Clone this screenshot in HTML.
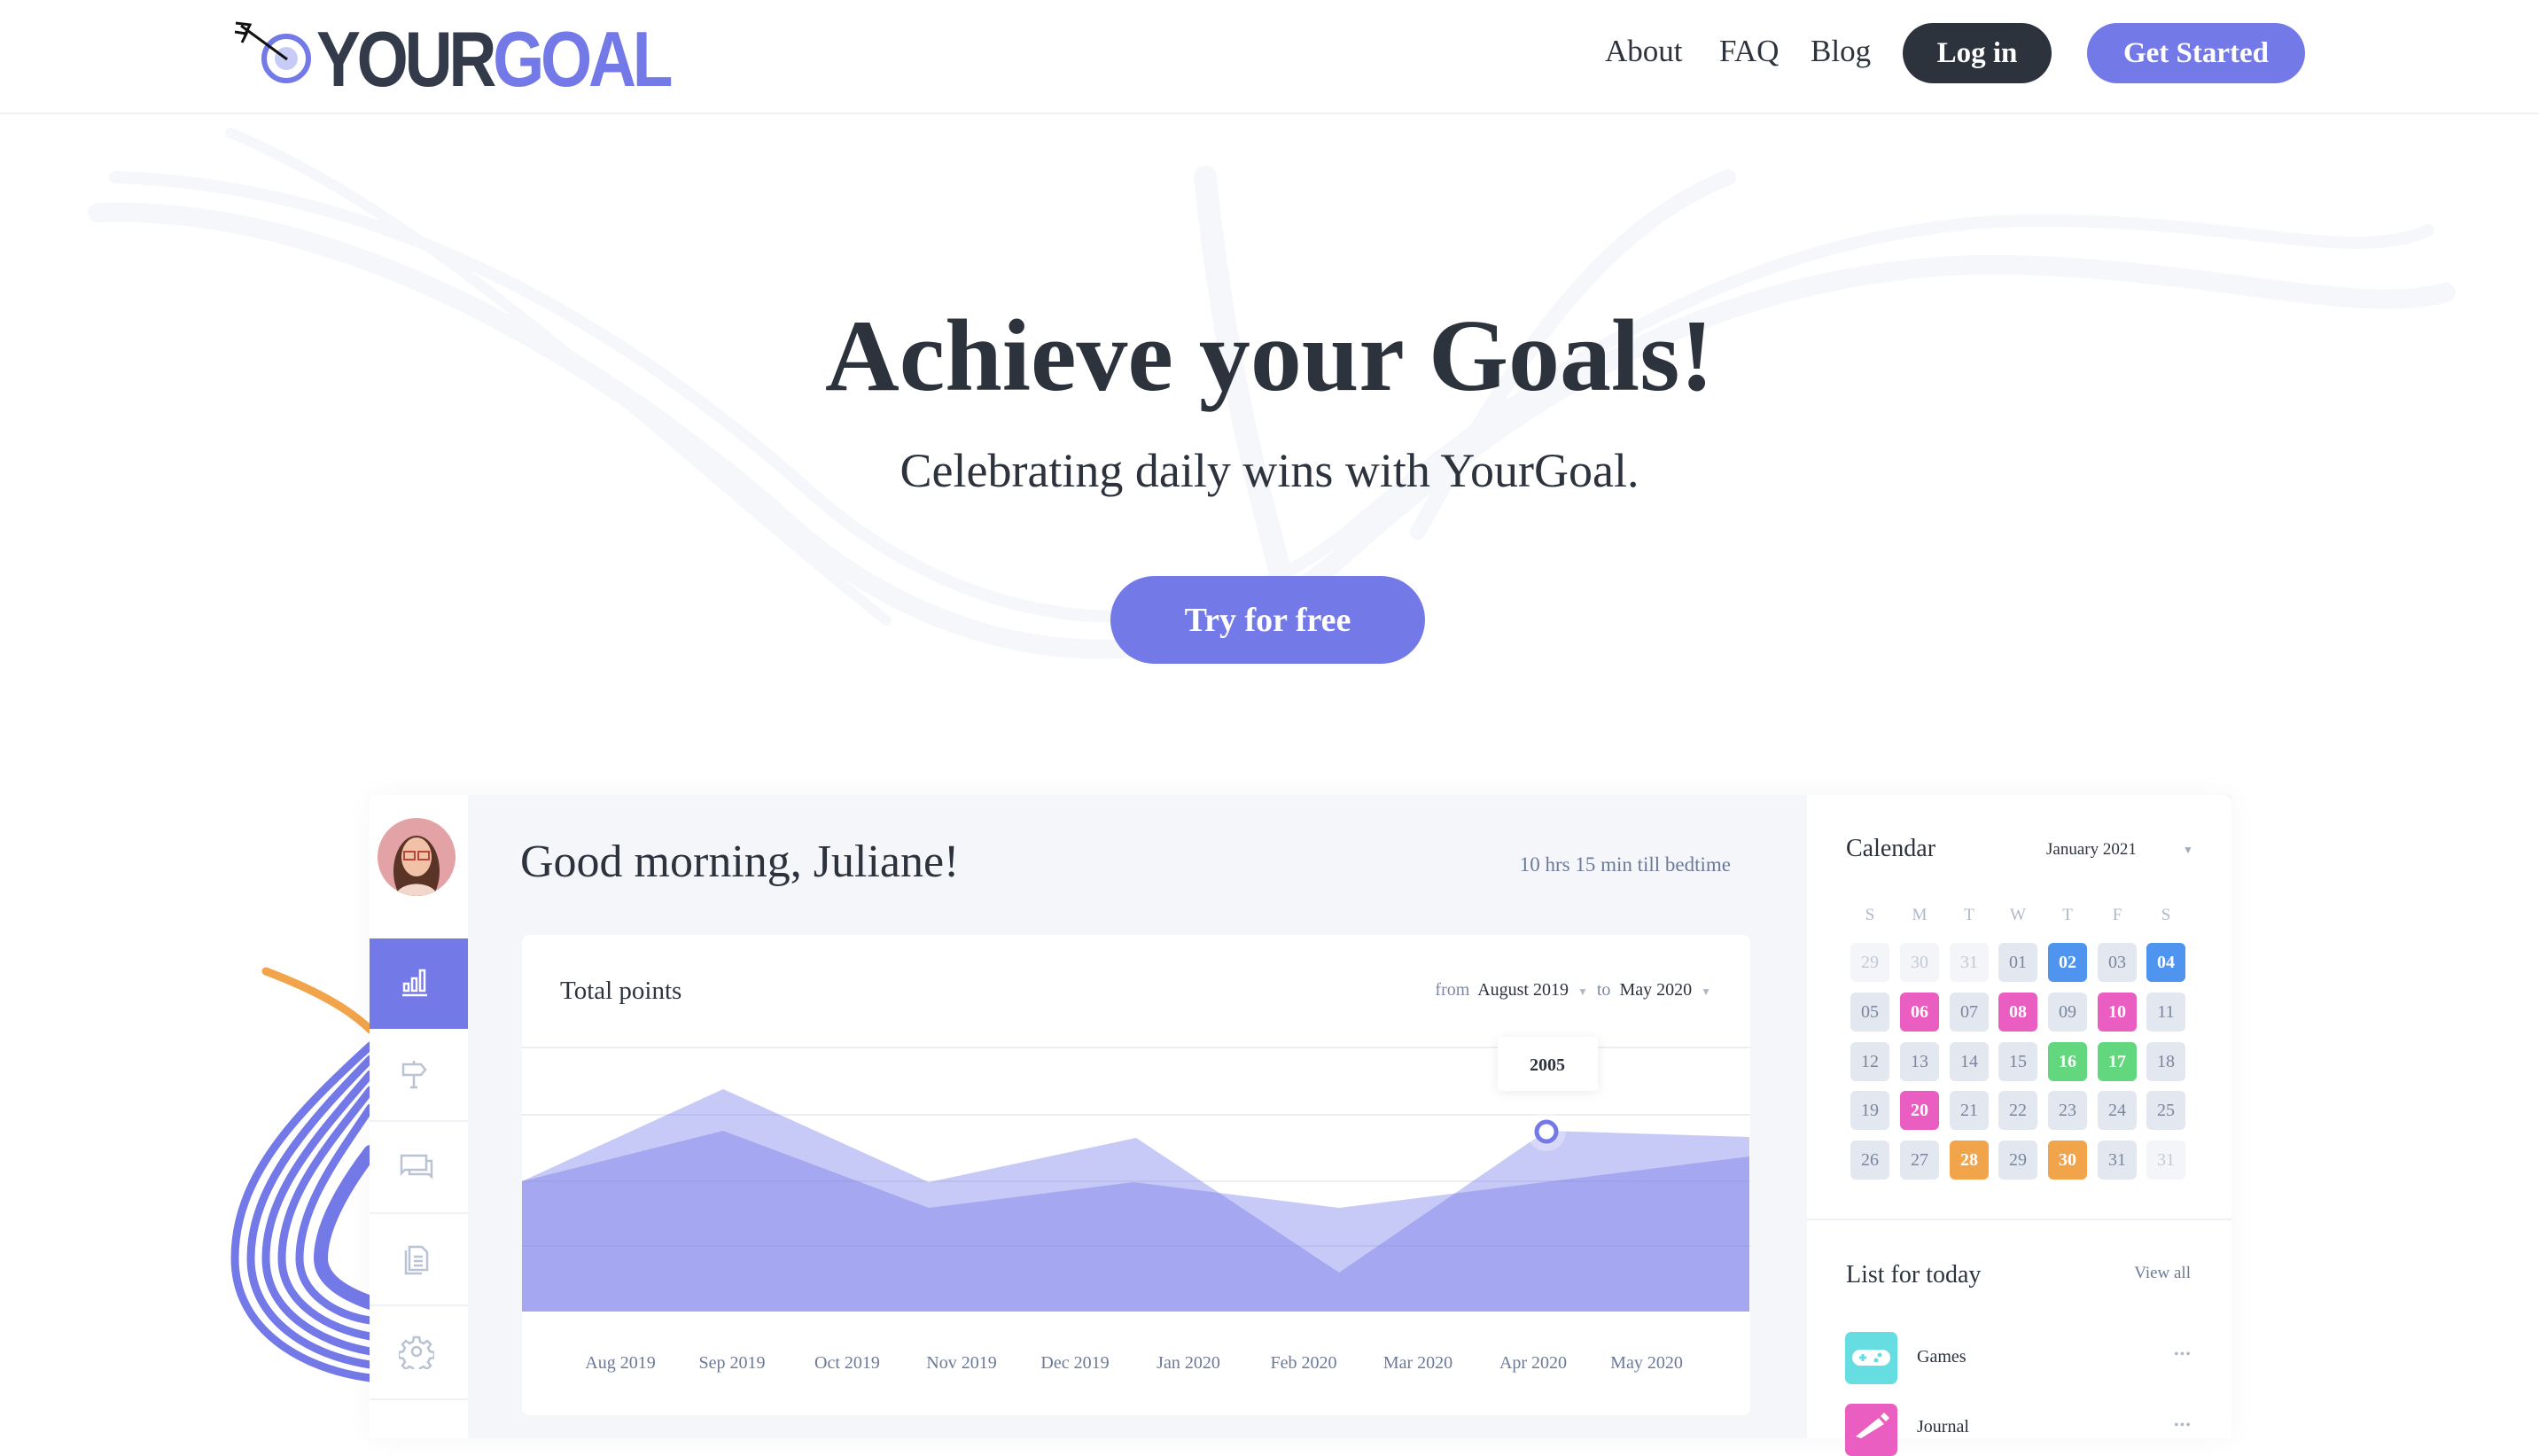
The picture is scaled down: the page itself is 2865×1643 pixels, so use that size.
<!DOCTYPE html>
<html><head><meta charset="utf-8"><style>
*{margin:0;padding:0;box-sizing:border-box}
body{width:2865px;height:1623px;overflow:hidden;background:#fff;position:relative;font-family:"Liberation Serif",serif;color:#2d333d}
.a{position:absolute;white-space:nowrap}
.nav{font-size:35px;top:38px;color:#2d333d}
.btn{position:absolute;border-radius:40px;color:#fff;font-weight:bold;font-size:33px;display:flex;align-items:center;justify-content:center}
.cell{position:absolute;width:44px;height:44px;border-radius:6px;background:#e3e7f0;color:#7a869e;font-size:20px;display:flex;align-items:center;justify-content:center}
.f{background:#f3f5f9;color:#c3c9d6}
.b{background:#4f94ef;color:#fff;font-weight:bold}
.p{background:#ea5ec1;color:#fff;font-weight:bold}
.g{background:#63d77d;color:#fff;font-weight:bold}
.o{background:#f2a44b;color:#fff;font-weight:bold}
.xl{position:absolute;top:1527px;font-size:20px;color:#6b7a99;transform:translateX(-50%)}
.wd{position:absolute;top:1022px;font-size:19px;color:#b0b8c8;transform:translateX(-50%)}
</style></head><body>
<svg class="a" style="left:0;top:128px" width="2865" height="700" viewBox="0 128 2865 700" fill="none" stroke="#f6f7fb" stroke-linecap="round">
<path d="M110 240 C400 230 700 420 900 600 C1050 730 1300 800 1500 640 C1700 460 1900 320 2200 300 C2450 290 2650 360 2760 330" stroke-width="22"/>
<path d="M130 200 C450 210 720 380 920 560 C1080 700 1320 760 1520 600 C1720 430 1950 270 2250 250 C2500 240 2650 300 2740 260" stroke-width="14"/>
<path d="M1360 200 C1380 400 1420 560 1460 700" stroke-width="26"/>
<path d="M1600 600 C1700 420 1800 260 1950 200" stroke-width="18"/>
<path d="M260 150 C500 250 750 500 1000 700" stroke-width="12"/>
</svg>
<div class="a" style="left:0;top:127px;width:2865px;height:2px;background:#eef0f3"></div>
<svg class="a" style="left:262px;top:24px" width="100" height="75" viewBox="0 0 100 75">
<circle cx="61" cy="42" r="25" fill="none" stroke="#7479e8" stroke-width="6"/>
<circle cx="61" cy="42" r="13" fill="#c9cbf7"/>
<path d="M62 43 L10 5 M4 2 L20 4 L14 16 M3 12 L16 14 L11 24" stroke="#111" stroke-width="3" fill="none"/>
</svg>
<div class="a" style="left:357px;top:16px;font-family:'Liberation Sans',sans-serif;font-weight:bold;font-size:88px;letter-spacing:-5px;transform:scaleX(0.85);transform-origin:left"><span style="color:#333a4a">YOUR</span><span style="color:#7479e8">GOAL</span></div>
<div class="a nav" style="left:1811px">About</div>
<div class="a nav" style="left:1940px">FAQ</div>
<div class="a nav" style="left:2043px">Blog</div>
<div class="btn" style="left:2147px;top:26px;width:168px;height:68px;background:#2d333d">Log in</div>
<div class="btn" style="left:2355px;top:26px;width:246px;height:68px;background:#7479e8">Get Started</div>
<div class="a" style="left:0;width:2865px;text-align:center;top:336px;font-size:116px;font-weight:bold">Achieve your Goals!</div>
<div class="a" style="left:0;width:2865px;text-align:center;top:500px;font-size:54px">Celebrating daily wins with YourGoal.</div>
<div class="btn" style="left:1253px;top:650px;width:355px;height:99px;border-radius:50px;background:#7479e8;font-size:38px">Try for free</div>
<svg class="a" style="left:250px;top:1080px" width="180" height="500" viewBox="250 1080 180 500" fill="none" stroke-linecap="round">
<path d="M300 1096 C350 1115 390 1135 418 1162" stroke="#f2a44b" stroke-width="9"/>
<g stroke="#7479e8" stroke-width="9">
<path d="M418 1180 C330 1260 265 1330 265 1420 C265 1500 340 1545 418 1555"/>
<path d="M418 1195 C345 1270 283 1340 283 1420 C283 1490 350 1530 418 1540"/>
<path d="M418 1212 C360 1280 300 1345 300 1420 C300 1480 360 1515 418 1525"/>
<path d="M418 1230 C372 1290 318 1350 318 1420 C318 1470 370 1500 418 1508"/>
<path d="M418 1250 C385 1300 338 1360 338 1420 C338 1460 380 1485 418 1490"/>
<path d="M418 1300 C395 1330 362 1380 362 1420 C362 1445 390 1460 418 1470" stroke-width="16"/>
</g>
</svg>
<div class="a" style="left:417px;top:897px;width:2101px;height:726px;background:#f5f6fa;box-shadow:0 0 30px rgba(0,0,0,0.04)"></div>
<div class="a" style="left:417px;top:897px;width:111px;height:726px;background:#fff"></div>
<svg class="a" style="left:426px;top:923px" width="88" height="88"><defs><clipPath id="c"><circle cx="44" cy="44" r="44"/></clipPath></defs><g clip-path="url(#c)"><rect width="88" height="88" fill="#e3a3a6"/><ellipse cx="44" cy="60" rx="26" ry="40" fill="#5a3426"/><ellipse cx="44" cy="44" rx="17" ry="22" fill="#f1c2a6"/><rect x="30" y="38" width="12" height="9" fill="none" stroke="#b5473d" stroke-width="2"/><rect x="46" y="38" width="12" height="9" fill="none" stroke="#b5473d" stroke-width="2"/><path d="M20 88 C25 70 63 70 68 88Z" fill="#f4d7cc"/></g></svg>
<div class="a" style="left:417px;top:1059px;width:111px;height:102px;background:#7479e8"></div>
<div class="a" style="left:417px;top:1264px;width:111px;height:2px;background:#eef1f6"></div>
<div class="a" style="left:417px;top:1368px;width:111px;height:2px;background:#eef1f6"></div>
<div class="a" style="left:417px;top:1472px;width:111px;height:2px;background:#eef1f6"></div>
<div class="a" style="left:417px;top:1578px;width:111px;height:2px;background:#eef1f6"></div>
<svg class="a" style="left:450px;top:1088px" width="40" height="40" viewBox="0 0 40 40" fill="none" stroke="#fff" stroke-width="2.5"><rect x="6" y="22" width="5" height="8"/><rect x="15" y="16" width="5" height="14"/><rect x="24" y="7" width="5" height="23"/><path d="M4 35h28"/></svg>
<svg class="a" style="left:450px;top:1193px" width="40" height="40" viewBox="0 0 40 40" fill="none" stroke="#b9c3d3" stroke-width="2.5"><path d="M17 4v4M5 8h20l5 6-5 6H5z M17 20v14M13 34h8"/></svg>
<svg class="a" style="left:450px;top:1298px" width="40" height="40" viewBox="0 0 40 40" fill="none" stroke="#b9c3d3" stroke-width="2.5"><path d="M3 6h28v16H7l-4 4z M31 12h6v18l-3-3H12v-5"/></svg>
<svg class="a" style="left:450px;top:1400px" width="40" height="40" viewBox="0 0 40 40" fill="none" stroke="#b9c3d3" stroke-width="2.5"><path d="M12 7h14l6 6v20H12z M8 11v26h18 M17 18h10M17 23h10M17 28h10"/></svg>
<svg class="a" style="left:450px;top:1505px" width="40" height="40" viewBox="0 0 40 40" fill="none" stroke="#b9c3d3" stroke-width="2.5"><circle cx="20" cy="20" r="5"/><path d="M17 4h6l1 5 4 2 4-3 4 4-3 4 2 4 5 1v6l-5 1-2 4 3 4-4 4-4-3-4 2-1 5h-6l-1-5-4-2-4 3-4-4 3-4-2-4-5-1v-6l5-1 2-4-3-4 4-4 4 3 4-2z"/></svg>
<div class="a" style="left:587px;top:943px;font-size:52px">Good morning, Juliane!</div>
<div class="a" style="left:1710px;top:963px;font-size:23px;color:#6b7a99;width:243px;text-align:right">10 hrs 15 min till bedtime</div>
<div class="a" style="left:589px;top:1055px;width:1386px;height:542px;background:#fff;border-radius:8px"></div>
<div class="a" style="left:632px;top:1102px;font-size:29px">Total points</div>
<div class="a" style="left:1500px;top:1106px;width:431px;text-align:right;font-size:20px;color:#7d89a3">from&nbsp; <span style="color:#2d333d">August 2019</span> &nbsp;<span style="font-size:12px;color:#b0b8c8">▼</span> &nbsp;to&nbsp; <span style="color:#2d333d">May 2020</span> &nbsp;<span style="font-size:12px;color:#b0b8c8">▼</span></div>
<svg class="a" style="left:589px;top:1150px" width="1386" height="340" viewBox="589 1150 1386 340">
<g stroke="#eceef4" stroke-width="2"><path d="M589 1182H1975M589 1258H1975M589 1333H1975M589 1406H1975"/></g>
<path d="M589 1333 L816 1276 L1048 1363 L1279 1334 L1511 1363 L1974 1305 L1974 1480 L589 1480Z" fill="#7479e8" fill-opacity="0.4"/>
<path d="M589 1333 L816 1229 L1048 1334 L1282 1284 L1511 1436 L1745 1276 L1974 1283 L1974 1480 L589 1480Z" fill="#7479e8" fill-opacity="0.4"/>
<rect x="1690" y="1170" width="113" height="61" rx="4" fill="#fff" style="filter:drop-shadow(0 2px 6px rgba(0,0,0,0.08))"/>
<text x="1746" y="1208" text-anchor="middle" font-family="Liberation Serif" font-weight="bold" font-size="20" fill="#2d333d">2005</text>
<circle cx="1745" cy="1277" r="22" fill="#fff" fill-opacity="0.3"/>
<circle cx="1745" cy="1277" r="11" fill="#fff" stroke="#7479e8" stroke-width="5"/>
</svg>
<div class="xl" style="left:700px">Aug 2019</div><div class="xl" style="left:826px">Sep 2019</div><div class="xl" style="left:956px">Oct 2019</div><div class="xl" style="left:1085px">Nov 2019</div><div class="xl" style="left:1213px">Dec 2019</div><div class="xl" style="left:1341px">Jan 2020</div><div class="xl" style="left:1471px">Feb 2020</div><div class="xl" style="left:1600px">Mar 2020</div><div class="xl" style="left:1730px">Apr 2020</div><div class="xl" style="left:1858px">May 2020</div>
<div class="a" style="left:2039px;top:897px;width:479px;height:726px;background:#fff;border-radius:0 10px 0 0"></div>
<div class="a" style="left:2083px;top:942px;font-size:28px">Calendar</div>
<div class="a" style="left:2309px;top:948px;font-size:19px">January 2021</div>
<div class="a" style="left:2463px;top:952px;font-size:12px;color:#a0a9bb">▼</div>
<div class="wd" style="left:2110px">S</div><div class="wd" style="left:2166px">M</div><div class="wd" style="left:2222px">T</div><div class="wd" style="left:2277px">W</div><div class="wd" style="left:2333px">T</div><div class="wd" style="left:2389px">F</div><div class="wd" style="left:2444px">S</div>
<div class="cell f" style="left:2088px;top:1064px">29</div><div class="cell f" style="left:2144px;top:1064px">30</div><div class="cell f" style="left:2200px;top:1064px">31</div><div class="cell" style="left:2255px;top:1064px">01</div><div class="cell b" style="left:2311px;top:1064px">02</div><div class="cell" style="left:2367px;top:1064px">03</div><div class="cell b" style="left:2422px;top:1064px">04</div>
<div class="cell" style="left:2088px;top:1120px">05</div><div class="cell p" style="left:2144px;top:1120px">06</div><div class="cell" style="left:2200px;top:1120px">07</div><div class="cell p" style="left:2255px;top:1120px">08</div><div class="cell" style="left:2311px;top:1120px">09</div><div class="cell p" style="left:2367px;top:1120px">10</div><div class="cell" style="left:2422px;top:1120px">11</div>
<div class="cell" style="left:2088px;top:1176px">12</div><div class="cell" style="left:2144px;top:1176px">13</div><div class="cell" style="left:2200px;top:1176px">14</div><div class="cell" style="left:2255px;top:1176px">15</div><div class="cell g" style="left:2311px;top:1176px">16</div><div class="cell g" style="left:2367px;top:1176px">17</div><div class="cell" style="left:2422px;top:1176px">18</div>
<div class="cell" style="left:2088px;top:1231px">19</div><div class="cell p" style="left:2144px;top:1231px">20</div><div class="cell" style="left:2200px;top:1231px">21</div><div class="cell" style="left:2255px;top:1231px">22</div><div class="cell" style="left:2311px;top:1231px">23</div><div class="cell" style="left:2367px;top:1231px">24</div><div class="cell" style="left:2422px;top:1231px">25</div>
<div class="cell" style="left:2088px;top:1287px">26</div><div class="cell" style="left:2144px;top:1287px">27</div><div class="cell o" style="left:2200px;top:1287px">28</div><div class="cell" style="left:2255px;top:1287px">29</div><div class="cell o" style="left:2311px;top:1287px">30</div><div class="cell" style="left:2367px;top:1287px">31</div><div class="cell f" style="left:2422px;top:1287px">31</div>
<div class="a" style="left:2039px;top:1375px;width:479px;height:2px;background:#eef0f5"></div>
<div class="a" style="left:2083px;top:1423px;font-size:28px">List for today</div>
<div class="a" style="left:2372px;top:1426px;width:100px;text-align:right;font-size:19px;color:#6b7a99">View all</div>
<div class="a" style="left:2082px;top:1503px;width:59px;height:59px;border-radius:7px;background:#66dde0"></div>
<svg class="a" style="left:2088px;top:1518px" width="47" height="28" viewBox="0 0 47 28"><rect x="2" y="5" width="43" height="18" rx="9" fill="#fff"/><path d="M10 14h8M14 10v8" stroke="#66dde0" stroke-width="3"/><circle cx="33" cy="11" r="2.5" fill="#66dde0"/><circle cx="29" cy="17" r="2.5" fill="#66dde0"/></svg>
<div class="a" style="left:2163px;top:1520px;font-size:20px">Games</div>
<div class="a" style="left:2453px;top:1520px;font-size:16px;color:#b0b8c8;letter-spacing:1px">•••</div>
<div class="a" style="left:2082px;top:1584px;width:59px;height:59px;border-radius:7px;background:#ea5ec1"></div>
<svg class="a" style="left:2090px;top:1588px" width="45" height="35" viewBox="0 0 45 35"><path d="M4 33 L30 12 L36 19 L10 35Z M32 10 L36 6 L42 12 L38 16Z" fill="#fff"/></svg>
<div class="a" style="left:2163px;top:1599px;font-size:20px">Journal</div>
<div class="a" style="left:2453px;top:1600px;font-size:16px;color:#b0b8c8;letter-spacing:1px">•••</div>
</body></html>
